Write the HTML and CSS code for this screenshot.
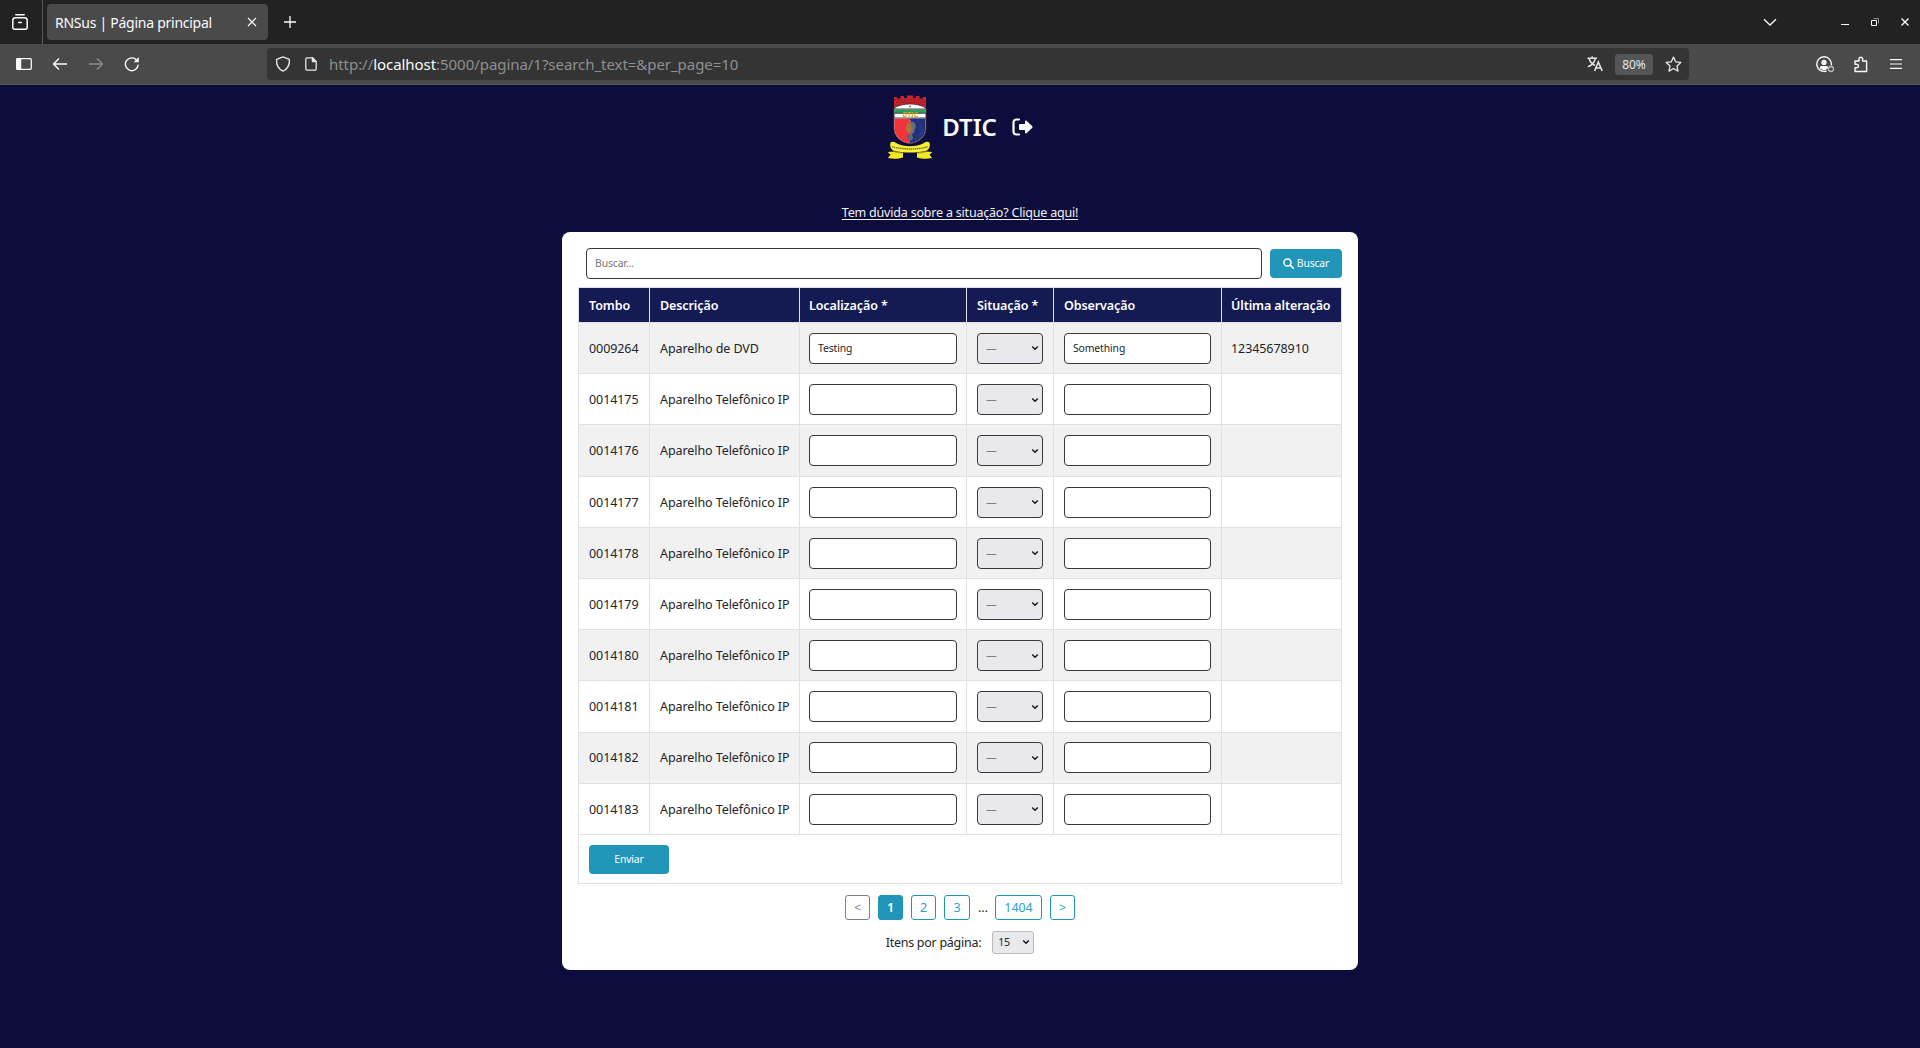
FILE: index.html
```html
<!DOCTYPE html>
<html lang="pt-BR">
<head>
<meta charset="utf-8">
<title>RNSus | Página principal</title>
<link rel="stylesheet" href="styles.css">
</head>
<body>
<svg class="defs" width="0" height="0" aria-hidden="true">
  <symbol id="chevron" viewBox="0 0 8 8"><path d="M1.2 2.4 4 5.2 6.8 2.4" fill="none" stroke="#15141a" stroke-width="1.4"/></symbol>
</svg>

<div class="tabstrip">
  <div class="overview">
    <svg width="18" height="18" viewBox="0 0 18 18" fill="none" stroke="#fbfbfe" stroke-width="1.5" stroke-linecap="round"><path d="M4.8 1.7h8.400"/><path d="M1.800 7.500c0-1.700.900-2.700 2.600-2.700h9.200c1.700 0 2.600 1 2.600 2.700v6.700c0 1.100-.900 2-2 2H3.800c-1.100 0-2-.900-2-2zM7.700 9.500h2.600"/></svg>
  </div>
  <div class="tab">
    <span class="tab-title">RNSus | Página principal</span>
    <svg width="10" height="10" viewBox="0 0 10 10" stroke="#fbfbfe" stroke-width="1.2"><path d="m1 1 8 8M9 1 1 9"/></svg>
  </div>
  <svg class="new-tab" width="14" height="14" viewBox="0 0 14 14" stroke="#fbfbfe" stroke-width="1.3"><path d="M7 1v12M1 7h12"/></svg>
  <div class="window-controls">
    <svg class="list-tabs" width="14" height="9" viewBox="0 0 14 9" fill="none" stroke="#fbfbfe" stroke-width="1.3"><path d="m1 1.3 6 5.7 6-5.7"/></svg>
    <svg width="8" height="8" viewBox="0 0 8 8"><path d="M0 6h8v1H0z" fill="#fff"/></svg>
    <svg width="8" height="8" viewBox="0 0 8 8" fill="none"><path d="M2.5.5h5v5" stroke="#919191"/><path d="M.5 2.5h5v5h-5z" stroke="#fff"/></svg>
    <svg width="8" height="8" viewBox="0 0 8 8" stroke="#fff" stroke-width="1.3"><path d="m.5.5 7 7M7.5.5l-7 7"/></svg>
  </div>
</div>

<div class="navbar">
  <div class="nav-buttons">
    <svg width="16" height="12" viewBox="0 0 16 12" fill="none" stroke="#fbfbfe" stroke-width="1.3"><rect x=".7" y=".7" width="14.6" height="10.6" rx="1"/><path d="M1 1h3.600v10H1z" fill="#fbfbfe"/></svg>
    <svg width="16" height="14" viewBox="0 0 16 14" fill="none" stroke="#fbfbfe" stroke-width="1.4"><path d="M15 7H2M7 1.500 1.500 7 7 12.500"/></svg>
    <svg width="16" height="14" viewBox="0 0 16 14" fill="none" stroke="#8d8d8f" stroke-width="1.4"><path d="M1 7h13M9 1.500 14.500 7 9 12.500"/></svg>
    <svg width="16" height="16" viewBox="0 0 16 16" fill="none" stroke="#fbfbfe" stroke-width="1.4"><path d="M14.2 8.600A6.400 6.400 0 1 1 12.600 4"/><path d="M14.800 1v5.200H9.600z" fill="#fbfbfe" stroke="none"/></svg>
  </div>
  <div class="urlbar">
    <svg width="16" height="16" viewBox="0 0 16 16" fill="none" stroke="#e6e6e8" stroke-width="1.4" stroke-linejoin="round"><path d="M8 .9 14.400 3.300c.3 5.300-1.500 9.700-6.400 11.800C3.100 13 1.300 8.600 1.600 3.300z"/></svg>
    <svg class="page-icon" width="12" height="14" viewBox="0 0 12 14" fill="none" stroke="#e6e6e8" stroke-width="1.3" stroke-linejoin="round"><path d="M2 .8h5.400l3.800 3.800v7.400a1.200 1.200 0 0 1-1.200 1.200H2A1.200 1.200 0 0 1 .8 12V2A1.200 1.200 0 0 1 2 .8z"/><path d="M7.400.8v3.800h3.800z" fill="#e6e6e8"/></svg>
    <span class="url">http://<b>localhost</b>:5000/pagina/1?search_text=&amp;per_page=10</span>
    <svg class="translate" width="17" height="16" viewBox="0 0 17 16" fill="none" stroke="#e6e6e8" stroke-width="1.4"><path d="M.5 2.200h9.500M5.200.2v2M2 2.500c.8 3 3 5.500 6 7M8.300 2.500C7.500 6 4.500 9.500.8 10.800"/><path d="m7.600 15 3.700-9 3.900 9M9 12h5" stroke-width="1.6"/></svg>
    <span class="zoom">80%</span>
    <svg class="star" width="17" height="17" viewBox="0 0 17 17" fill="none" stroke="#e6e6e8" stroke-width="1.3" stroke-linejoin="round"><path d="m8.500 1.100 2.200 4.700 5.100.6-3.800 3.500 1 5.200-4.500-2.600L4 15.100l1-5.200-3.800-3.500 5.100-.6z"/></svg>
  </div>
  <div class="nav-tools">
    <svg class="account" width="19" height="17" viewBox="0 0 19 17" fill="none" stroke="#fbfbfe" stroke-width="1.400"><path d="M15.300 9.300A7.300 7.300 0 1 0 10.500 15"/><circle cx="8" cy="6.400" r="2.600" fill="#fbfbfe" stroke="none"/><path d="M3.800 12c0-1.400.8-2 2-2h4.400c1.200 0 2 .6 2 2-2.400 2.700-6 2.700-8.400 0z" fill="#fbfbfe" stroke="none"/><circle cx="15" cy="13" r="2.500" stroke="#bdbdbf" stroke-width="1.300"/></svg>
    <svg width="16" height="17" viewBox="0 0 16 17" fill="none" stroke="#fbfbfe" stroke-width="1.400" stroke-linejoin="round"><path d="M2 15.500v-3.700h1.700a1.800 1.800 0 0 0 0-3.600H2V5h4V3a1.800 1.800 0 0 1 3.600 0v2h4v10.500z"/></svg>
    <svg width="12" height="10" viewBox="0 0 12 10" fill="#fbfbfe"><path d="M0 0h12v1.200H0zM0 4.400h12v1.200H0zM0 8.800h12V10H0z"/></svg>
  </div>
</div>

<main class="page">
  <header class="brand">
    <svg class="crest" width="46" height="66" viewBox="0 0 46 66">
      <path d="M7 14V3h3v1.500h3.500V2H17v2h3V1.500h6V4h3V2h3.500v2.500H36V3h3v11z" fill="#c9242b"/>
      <path d="M8 6h30M9 8.500h29M8 11h30" stroke="#7d1620" stroke-width="1.200" stroke-dasharray="1.500 1.500"/>
      <path d="M7 14c9-5.500 23-5.500 32 0v20c0 9-7 14.500-16 15.500C14 48.500 7 43 7 34z" fill="#fff" stroke="#5b2a35" stroke-width=".9"/>
      <path d="M7.400 15.500h31.200V19H7.400z" fill="#23a05b"/>
      <path d="M7 15h32M7 19.300h32M7 24h32" stroke="#3a3434" stroke-width=".9"/>
      <path d="M7.500 24.500H23V49C14 48 7.500 42.500 7.500 34z" fill="#ee3438"/>
      <path d="M38.500 24.500H23V49c9-1 15.500-6.500 15.500-15z" fill="#22307c"/>
      <path d="M30 27c4 3 6 8 5 14M28 45c3-1 5-3 6-6" fill="none" stroke="#3b5fae" stroke-width="1" stroke-dasharray="1 1.500"/>
      <path d="M23 26v3M20 29.500l2 2M26 28.500l-2 3M18 34h3M28 33l-3 1.500M20 38l2-2M27 38l-3-2" stroke="#b8743a" stroke-width="1.700"/>
      <path d="M23 28c5-1 7 3 5 7l-3 6h-2z" fill="#66707c"/>
      <ellipse cx="22" cy="34" rx="2.500" ry="5" fill="#a87838"/>
      <circle cx="23" cy="43.500" r="3" fill="#55697b"/>
      <circle cx="23" cy="12.500" r="1" fill="#8f7a30"/>
      <text class="crest-name" x="23.300" y="22.600" text-anchor="middle">DTIC</text>
      <path d="M7 57.500.5 58l3 2.500L1 64c5 1.200 10.500.8 15-.5v-4.800zM39 57.500l6.500.5-3 2.500 2.500 3.500c-5 1.200-10.500.8-15-.5v-4.800z" fill="#f3e924"/>
      <path d="M3.500 48.500c2-1 4-.8 5.500.5 8 4.300 20 4.300 28 0 1.500-1.300 3.500-1.500 5.500-.5.8 3 .3 6-2.500 8-10 2.800-24 2.800-34 0-2.800-2-3.300-5-2.500-8z" fill="#f7ef3a"/>
      <path d="M5 52.700c11 3 25 3 36 0" fill="none" stroke="#77701e" stroke-width="1.500" stroke-dasharray="1.400 .7"/>
      <path d="M7 57.500c2 1 5 1.300 8 1.500M39 57.500c-2 1-5 1.300-8 1.500" fill="none" stroke="#8c8319" stroke-width=".8"/>
    </svg>
    <h1>DTIC</h1>
    <svg class="logout" width="21" height="18" viewBox="0 0 21 18"><path d="M7 1.500H4.500A3 3 0 0 0 1.500 4.500v9a3 3 0 0 0 3 3H7" fill="none" stroke="#fff" stroke-width="2.200" stroke-linecap="round"/><path d="M7 7c0-.5.400-.9.900-.9H13V3.500c0-.9.900-1.300 1.500-.7l5.800 5.500c.4.400.4 1 0 1.400l-5.800 5.500c-.6.600-1.500.2-1.500-.7v-2.600H7.900c-.5 0-.9-.4-.9-.9z" fill="#fff"/></svg>
  </header>

  <a class="help" href="#">Tem dúvida sobre a situação? Clique aqui!</a>

  <section class="card">
    <form class="search">
      <input class="field" type="text" placeholder="Buscar...">
      <button class="btn" type="button"><svg width="11" height="11" viewBox="0 0 11 11" fill="none" stroke="#fff"><circle cx="4.500" cy="4.500" r="3.600" stroke-width="1.500"/><path d="m7.200 7.200 3 3" stroke-width="1.800" stroke-linecap="round"/></svg>Buscar</button>
    </form>

    <table class="items">
      <colgroup><col class="c-tombo"><col class="c-desc"><col class="c-loc"><col class="c-sit"><col class="c-obs"><col class="c-last"></colgroup>
      <thead>
        <tr><th>Tombo</th><th>Descrição</th><th>Localização *</th><th>Situação *</th><th>Observação</th><th>Última alteração</th></tr>
      </thead>
      <tbody>
        <tr><td>0009264</td><td>Aparelho de DVD</td><td><input class="field" value="Testing"></td><td><div class="select"><span>—</span><svg><use href="#chevron"/></svg></div></td><td><input class="field" value="Something"></td><td>12345678910</td></tr>
        <tr><td>0014175</td><td>Aparelho Telefônico IP</td><td><input class="field"></td><td><div class="select"><span>—</span><svg><use href="#chevron"/></svg></div></td><td><input class="field"></td><td></td></tr>
        <tr><td>0014176</td><td>Aparelho Telefônico IP</td><td><input class="field"></td><td><div class="select"><span>—</span><svg><use href="#chevron"/></svg></div></td><td><input class="field"></td><td></td></tr>
        <tr><td>0014177</td><td>Aparelho Telefônico IP</td><td><input class="field"></td><td><div class="select"><span>—</span><svg><use href="#chevron"/></svg></div></td><td><input class="field"></td><td></td></tr>
        <tr><td>0014178</td><td>Aparelho Telefônico IP</td><td><input class="field"></td><td><div class="select"><span>—</span><svg><use href="#chevron"/></svg></div></td><td><input class="field"></td><td></td></tr>
        <tr><td>0014179</td><td>Aparelho Telefônico IP</td><td><input class="field"></td><td><div class="select"><span>—</span><svg><use href="#chevron"/></svg></div></td><td><input class="field"></td><td></td></tr>
        <tr><td>0014180</td><td>Aparelho Telefônico IP</td><td><input class="field"></td><td><div class="select"><span>—</span><svg><use href="#chevron"/></svg></div></td><td><input class="field"></td><td></td></tr>
        <tr><td>0014181</td><td>Aparelho Telefônico IP</td><td><input class="field"></td><td><div class="select"><span>—</span><svg><use href="#chevron"/></svg></div></td><td><input class="field"></td><td></td></tr>
        <tr><td>0014182</td><td>Aparelho Telefônico IP</td><td><input class="field"></td><td><div class="select"><span>—</span><svg><use href="#chevron"/></svg></div></td><td><input class="field"></td><td></td></tr>
        <tr><td>0014183</td><td>Aparelho Telefônico IP</td><td><input class="field"></td><td><div class="select"><span>—</span><svg><use href="#chevron"/></svg></div></td><td><input class="field"></td><td></td></tr>
      </tbody>
      <tfoot>
        <tr><td colspan="6"><button class="btn btn-send" type="button">Enviar</button></td></tr>
      </tfoot>
    </table>

    <nav class="pagination">
      <span class="pg disabled">&lt;</span>
      <span class="pg current">1</span>
      <a class="pg" href="#">2</a>
      <a class="pg wide" href="#">3</a>
      <span class="dots">...</span>
      <a class="pg last" href="#">1404</a>
      <a class="pg" href="#">&gt;</a>
    </nav>
    <div class="per-page">
      <span>Itens por página:</span>
      <div class="select select-sm"><span>15</span><svg><use href="#chevron"/></svg></div>
    </div>
  </section>
</main>
</body>
</html>
```
FILE: styles.css
```css
* { box-sizing: border-box; }
body {
  margin: 0;
  height: 1048px;
  overflow: hidden;
  background: #0d0d3d;
  color: #212529;
  font: 12.5px/19px "Noto Sans", "Open Sans", sans-serif;
  letter-spacing: -0.08px;
}
svg { display: block; flex: none; }
.defs { position: absolute; }

/* Browser tab strip */
.tabstrip { display: flex; align-items: center; height: 44px; background: #222222; }
.overview { width: 43px; height: 44px; padding: 13px 0 0 11px; border-right: 1px solid #5a5a5a; }
.tab {
  display: flex; align-items: center; justify-content: space-between;
  width: 221px; height: 36px; margin-left: 4px; padding: 0 11px 0 8px;
  border-radius: 4px; background: #4a4a4a;
}
.tab-title { color: #fbfbfe; font-size: 14px; letter-spacing: -0.26px; }
.new-tab { margin-left: 15px; }
.window-controls { display: flex; align-items: center; gap: 22px; margin-left: auto; padding-right: 11px; }
.list-tabs { margin-right: 42px; }

/* Browser toolbar */
.navbar {
  display: flex; align-items: center; height: 41px;
  background: #4a4a4a; border-bottom: 1px solid #565656;
}
.nav-buttons { display: flex; align-items: center; gap: 20px; width: 267px; padding-left: 16px; }
.urlbar {
  display: flex; align-items: center; width: 1422px; height: 32px; padding: 0 8px;
  border-radius: 4px; background: #343434;
}
.page-icon { margin-left: 14px; }
.url { margin-left: 12px; color: #8f8f91; font-size: 15px; letter-spacing: -0.05px; }
.url b { color: #fbfbfe; font-weight: 400; }
.translate { margin-left: auto; }
.zoom {
  width: 38px; height: 21px; margin: 0 12px 0 11px; border-radius: 3px; background: #555555;
  color: #e6e6e8; font-size: 12px; line-height: 21px; text-align: center;
}
.star { margin-right: -1px; }
.nav-tools { display: flex; align-items: center; gap: 21px; margin-left: auto; padding-right: 18px; }
.account { margin-right: -3px; }

/* Page */
.page { display: flex; flex-direction: column; align-items: center; }
.brand { display: flex; align-items: center; height: 84px; }
.crest-name { font: 700 6.5px "Noto Sans", sans-serif; fill: #c9a80c; letter-spacing: 0.2px; }
.brand h1 { margin: 0 15px 0 9px; color: #fff; font-size: 24px; font-weight: 600; line-height: 32px; letter-spacing: -0.1px; }
.help {
  height: 19px; margin-top: 34px; color: #f1f1f1; letter-spacing: -0.2px;
  text-underline-offset: 2px;
}
.card {
  width: 796px; height: 738px; margin-top: 10px; padding: 16px;
  border-radius: 8px; background: #fff;
}
.search { display: flex; align-items: center; gap: 8px; height: 31px; padding-left: 8px; }
.field {
  display: block; width: 100%; height: 31px; padding: 0 8px 1px;
  border: 1px solid #38383d; border-radius: 4px; background: #fff; color: #212529;
  font: 10.4px "Noto Sans", sans-serif; letter-spacing: -0.12px; outline: 0;
}
.field::placeholder { color: #757575; opacity: 1; }
.search .field { flex: 1; }
.btn {
  display: flex; align-items: center; justify-content: center; gap: 3px;
  width: 72px; height: 29px; padding: 0 0 1px; border: 0; border-radius: 4px;
  background: #2296ba; color: #fff; font: 10.4px "Noto Sans", sans-serif; letter-spacing: -0.15px;
}
.btn-send { width: 80px; }

.items {
  width: 764px; margin-top: 8px; table-layout: fixed;
  border-collapse: separate; border-spacing: 0;
  border-top: 1px solid #dee2e6; border-left: 1px solid #dee2e6;
}
.c-tombo { width: 71px; }
.c-desc { width: 150px; }
.c-loc { width: 167px; }
.c-sit { width: 87px; }
.c-obs { width: 168px; }
.c-last { width: 120px; }
.items th, .items td {
  padding: 0 9px 0 10px; border-right: 1px solid #dee2e6; border-bottom: 1px solid #dee2e6;
  text-align: left; vertical-align: middle; white-space: nowrap;
}
.items th:nth-child(3), .items td:nth-child(3),
.items th:nth-child(6), .items td:nth-child(6) { padding-left: 9px; }
.items td:nth-child(5) { padding-right: 10px; }
.items th { height: 35px; background: #141a54; color: #fff; font-weight: 600; letter-spacing: -0.1px; }
.items tbody td { height: 51.2px; padding-top: 0.8px; }
.items tbody tr:nth-child(odd) { background: #f1f1f1; }
.items tfoot td { height: 49px; padding-top: 1px; }

.select {
  display: flex; align-items: center; justify-content: space-between;
  width: 66px; height: 31px; padding: 0 3px 0 8px;
  border: 1px solid #38383d; border-radius: 4px; background: #e9e9ed;
  color: #7f7f84; font-size: 10.67px;
}
.select svg { width: 8px; height: 8px; }
.select-sm { width: 42px; height: 23px; padding-left: 5px; border-color: #b9b9be; border-radius: 3px; color: #212529; }

.pagination { display: flex; justify-content: center; gap: 8px; margin-top: 11px; }
.pg {
  width: 25px; height: 25px; border: 1px solid #2296ba; border-radius: 3px;
  color: #2f9fd0; line-height: 23px; text-align: center; text-decoration: none;
}
.pg.wide { width: 26px; }
.pg.last { width: 47px; }
.disabled { border-color: #808080; color: #808080; }
.current { background: #2296ba; color: #fff; font-weight: 600; }
.dots { width: 9px; line-height: 25px; }
.per-page { display: flex; align-items: center; justify-content: center; gap: 11px; margin-top: 11px; letter-spacing: -0.27px; }
```
